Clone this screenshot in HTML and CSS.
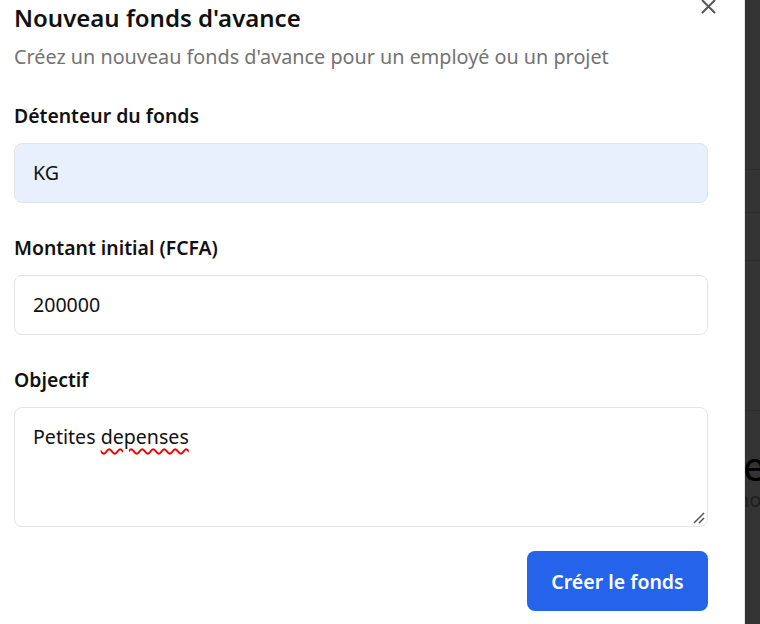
FILE: index.html
```html
<!DOCTYPE html>
<html lang="fr">
<head>
<meta charset="utf-8">
<title>Nouveau fonds d'avance</title>
<link rel="stylesheet" href="styles.css">
</head>
<body>
<div class="screen">
  <div class="dialog">
    <button class="close" aria-label="Fermer">
      <svg width="16" height="16" viewBox="0 0 16 16"><path d="M2 1 L15 14 M15 1 L2 14" stroke="#555" stroke-width="2" fill="none"/></svg>
    </button>
    <h2 class="title">Nouveau fonds d'avance</h2>
    <p class="subtitle">Créez un nouveau fonds d'avance pour un employé ou un projet</p>
    <form class="form">
      <div class="field">
        <label class="label">Détenteur du fonds</label>
        <div class="input autofill">KG</div>
      </div>
      <div class="field">
        <label class="label">Montant initial (FCFA)</label>
        <div class="input">200000</div>
      </div>
      <div class="field">
        <label class="label">Objectif</label>
        <div class="textarea"><span>Petites </span><span class="spell">depenses</span>
          <svg class="grip" width="12" height="12" viewBox="0 0 12 12"><path d="M1 11 L11 1 M6 11 L11 6" stroke="#555" stroke-width="1.5"/></svg>
        </div>
      </div>
      <div class="actions">
        <button type="button" class="submit">Créer le fonds</button>
      </div>
    </form>
  </div>
  <div class="backdrop">
    <div class="bd-row r1"></div>
    <div class="bd-row r2"></div>
    <div class="bd-row r3"></div>
    <div class="bd-row r4"></div>
    <div class="bd-big">e</div>
    <div class="bd-small">no</div>
  </div>
</div>
</body>
</html>
```
FILE: styles.css
```css
* { box-sizing: border-box; }
html, body { margin: 0; padding: 0; }
body {
  font-family: "Noto Sans", "Open Sans", sans-serif;
  color: #111;
  background: #333;
  width: 760px;
  height: 624px;
  overflow: hidden;
}
.screen {
  display: flex;
  height: 624px;
}
.dialog {
  position: relative;
  width: 745px;
  flex: none;
  background: #fff;
  border-right: 1px solid #e5e5e5;
  padding: 0 36px 0 14px;
}
.close {
  position: absolute;
  top: -1px;
  left: 700px;
  border: 0;
  background: none;
  padding: 0;
  width: 16px;
  height: 16px;
}
.close svg { display: block; }
.title {
  margin: 0;
  padding-top: 3px;
  font-size: 24px;
  line-height: 30px;
  font-weight: 600;
}
.subtitle {
  margin: 11px 0 0;
  font-size: 19.8px;
  line-height: 26px;
  color: #737373;
}
.form {
  display: flex;
  flex-direction: column;
  margin-top: 33px;
}
.field {
  display: flex;
  flex-direction: column;
  margin-bottom: 32px;
}
.label {
  font-size: 19.4px;
  line-height: 26px;
  font-weight: 600;
  margin-bottom: 14px;
}
.input, .textarea {
  width: 694px;
  border: 1px solid #e4e4e7;
  border-radius: 8px;
  font-size: 19.6px;
  line-height: 24px;
  padding: 17px 18px;
  height: 60px;
}
.autofill { background: #e8f0fe; }
.textarea {
  position: relative;
  height: 120px;
  padding-top: 17px;
}
.spell {
  text-decoration: underline wavy #e00;
  text-decoration-thickness: 1.5px;
  text-underline-offset: 4px;
}
.grip {
  position: absolute;
  right: 2px;
  bottom: 2px;
}
.actions {
  display: flex;
  justify-content: flex-end;
  margin-top: -8px;
}
.submit {
  width: 181px;
  height: 60px;
  border: 0;
  border-radius: 8px;
  background: #2563eb;
  color: #fff;
  font-family: inherit;
  font-size: 19.5px;
  font-weight: 600;
}
.backdrop {
  flex: 1;
  position: relative;
  background: #333;
  overflow: hidden;
}
.bd-row {
  position: absolute;
  left: 0;
  right: 0;
  height: 1px;
  background: #2c2c2c;
}
.r1 { top: 169px; }
.r2 { top: 212px; }
.r3 { top: 260px; }
.r4 { top: 410px; }
.bd-big {
  position: absolute;
  top: 446px;
  left: -2px;
  font-size: 40px;
  line-height: 40px;
  color: #000;
}
.bd-small {
  position: absolute;
  top: 490px;
  left: -8px;
  font-size: 20px;
  line-height: 20px;
  color: #1f1f1f;
}
```
